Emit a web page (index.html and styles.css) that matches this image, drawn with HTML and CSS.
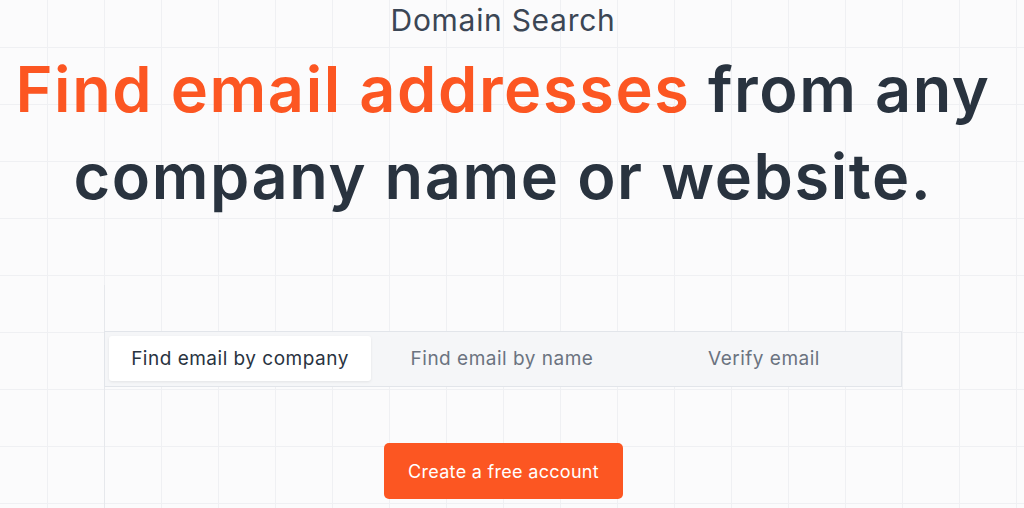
FILE: index.html
```html
<!DOCTYPE html>
<html lang="en">
<head>
  <meta charset="UTF-8" />
  <meta name="viewport" content="width=device-width, initial-scale=1.0"/>
  <title>Domain Search</title>
  <link rel="stylesheet" href="styles.css">
</head>
<body>
  <main class="hero">
    <p class="eyebrow">Domain Search</p>
    <h1 class="headline">
      <span class="accent">Find email addresses</span> from any company name or website.
    </h1>

    <!-- Search tabs -->
    <section class="finder">
      <div class="tabs">
        <button class="tab active">Find email by company</button>
        <button class="tab">Find email by name</button>
        <button class="tab">Verify email</button>
      </div>
      <a class="cta" href="#">Create a free account</a>
    </section>
  </main>
</body>
</html>
```

FILE: styles.css
```css
html, body {
  height: 100%;
}

body {
  margin: 0;
  font-family: Inter, "Noto Sans", sans-serif;
  color: #29333f;
  background-color: #fbfbfc;
  background-image:
    linear-gradient(to right, #eff0f3 1px, transparent 1px),
    linear-gradient(to bottom, #eff0f3 1px, transparent 1px);
  background-size: 57px 57px;
  background-position: 47px 47px;
  overflow: hidden;
}

.hero {
  width: 1006px;
  height: 100%;
  display: flex;
  flex-direction: column;
  align-items: center;
}

.eyebrow {
  margin: 0;
  padding-top: 2px;
  font-size: 30px;
  line-height: 36px;
  letter-spacing: 0.7px;
  color: #3b4655;
}

.headline {
  margin: 8px 0 0;
  font-size: 63px;
  font-weight: 600;
  line-height: 87px;
  text-align: center;
  color: #29333f;
  letter-spacing: 1.6px;
}

.accent {
  color: #fc5622;
}

/* Tab bar */
.finder {
  flex: 1;
  width: 798px;
  margin-top: 65px;
  padding-top: 46px;
  border-left: 1px solid #e6e8ec;
  display: flex;
  flex-direction: column;
  align-items: center;
  box-sizing: border-box;
}

.tabs {
  width: 798px;
  margin-left: -1px;
  box-sizing: border-box;
  display: grid;
  grid-template-columns: 1fr 1fr 1fr;
  padding: 4px 6px 5px 4px;
  background: #f5f6f8;
  border: 1px solid #e2e5ea;
}

.tab {
  height: 45px;
  border: none;
  background: none;
  font-family: Inter, "Noto Sans", sans-serif;
  font-size: 19px;
  letter-spacing: 0.5px;
  color: #6b7380;
  border-radius: 3px;
  cursor: pointer;
}

.tab.active {
  background: #fff;
  color: #29333f;
  box-shadow: 0 1px 3px rgba(0,0,0,0.08);
}

.cta {
  margin-top: 56px;
  width: 239px;
  height: 56px;
  display: flex;
  align-items: center;
  justify-content: center;
  background: #fc5622;
  color: #fff;
  font-size: 18px;
  letter-spacing: 0.3px;
  text-decoration: none;
  border-radius: 5px;
}
```
